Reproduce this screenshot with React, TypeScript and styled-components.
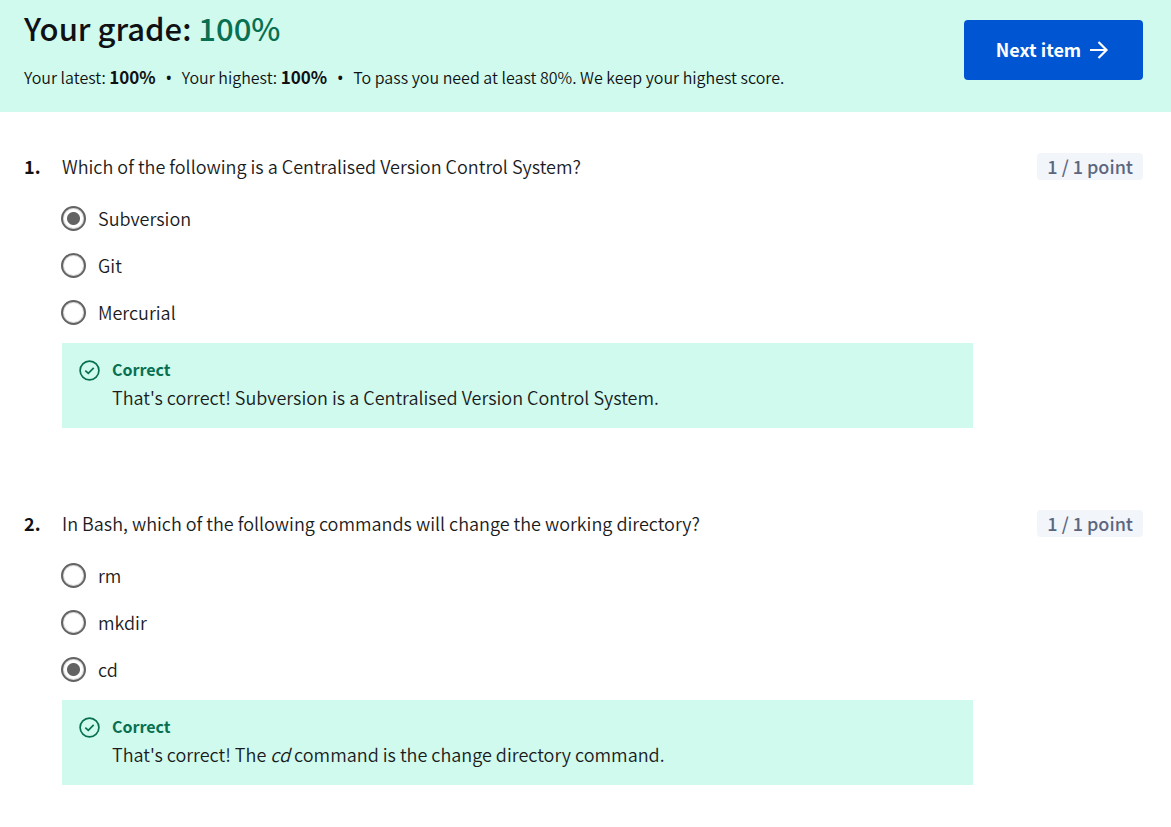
import React from "react";
import styled, { createGlobalStyle } from "styled-components";

const GlobalStyle = createGlobalStyle`
  *, *::before, *::after { box-sizing: border-box; }
  body {
    margin: 0;
    background: #ffffff;
    color: #1a1b1d;
    font-family: "Noto Sans CJK SC", "Noto Sans", sans-serif;
    font-size: 18px;
    font-weight: 350;
    line-height: 28px;
  }
`;

const Header = styled.header`
  display: flex;
  align-items: flex-start;
  justify-content: space-between;
  gap: 24px;
  min-height: 112px;
  padding: 8px 28px 20px 24px;
  background: #d0faed;
  color: #0f1114;
`;

const Title = styled.h1`
  margin: 0;
  font-size: 31px;
  line-height: 40px;
  font-weight: 500;
`;

const Grade = styled.span`
  color: #087051;
`;

const Summary = styled.p`
  display: flex;
  flex-wrap: wrap;
  margin: 15px 0 0;
  font-size: 16px;
  line-height: 28px;
`;

const Fact = styled.span`
  & + &::before {
    content: "•";
    margin: 0 10px;
    font-family: "Noto Sans", sans-serif;
    font-weight: 500;
  }
`;

const Strong = styled.strong`
  font-size: 17px;
  font-weight: 700;
`;

const NextButton = styled.button`
  display: flex;
  flex: none;
  align-items: center;
  justify-content: center;
  gap: 6px;
  width: 179px;
  height: 60px;
  margin-top: 12px;
  padding: 0;
  border: 0;
  border-radius: 4px;
  background: #0056d2;
  color: #ffffff;
  font: inherit;
  font-weight: 700;
  cursor: pointer;
`;

const Questions = styled.main`
  display: flex;
  flex-direction: column;
  gap: 81px;
  padding: 40px 28px 42px 24px;
`;

const Question = styled.section`
  display: grid;
  grid-template-columns: 38px minmax(0, 911px) minmax(max-content, 1fr);
`;

const Number = styled.span`
  color: #0f1114;
  font-weight: 700;
`;

const Prompt = styled.h2`
  margin: 0 0 15px;
  font-size: 18px;
  line-height: 28px;
  font-weight: inherit;
`;

const Points = styled.span`
  justify-self: end;
  align-self: start;
  margin-top: 1px;
  padding: 0 10px;
  border-radius: 4px;
  background: #f2f5fa;
  color: #5b6780;
  line-height: 27px;
  font-weight: 500;
`;

const Options = styled.fieldset`
  grid-column: 2;
  min-width: 0;
  margin: 0 0 7px;
  padding: 0;
  border: 0;
`;

const Option = styled.label`
  display: flex;
  align-items: center;
  gap: 12px;
  height: 47px;
`;

const Caption = styled.span`
  padding-bottom: 2px;
`;

const Radio = styled.input`
  appearance: none;
  width: 25px;
  height: 25px;
  margin: 0 0 0 -1px;
  border: 2px solid #636363;
  border-radius: 50%;
  background: #ffffff;
  box-shadow: inset 0 0 0 1px #d8d8d8;
  &:checked {
    background: radial-gradient(circle, #636363 6px, #ffffff 7px);
  }
`;

const Feedback = styled.div`
  display: grid;
  grid-column: 2;
  grid-template-columns: 21px 1fr;
  column-gap: 12px;
  padding: 12px 17px 17px;
  background: #d0faed;
`;

const CheckMark = styled.svg`
  margin-top: 5px;
`;

const Verdict = styled.strong`
  color: #087051;
  font-size: 16px;
  font-weight: 700;
`;

const Explanation = styled.div`
  grid-column: 2;
`;

const CheckIcon = () => (
  <CheckMark width="21" height="21" viewBox="0 0 21 21" fill="none" stroke="#087051" strokeWidth="1.7" aria-hidden="true">
    <circle cx="10.5" cy="10.5" r="9.4" />
    <path d="M6.300 10.600 9.300 13.300 14.700 7.900" />
  </CheckMark>
);

const ArrowIcon = () => (
  <svg width="24" height="24" viewBox="0 0 24 24" fill="none" stroke="#ffffff" strokeWidth="2.2" aria-hidden="true">
    <path d="M3 12h16.500M11.500 4l8 8-8 8" />
  </svg>
);

interface QuizItem {
  prompt: string;
  options: string[];
  answer: string;
  explanation: React.ReactNode;
}

const items: QuizItem[] = [
  {
    prompt: "Which of the following is a Centralised Version Control System?",
    options: ["Subversion", "Git", "Mercurial"],
    answer: "Subversion",
    explanation: "That's correct! Subversion is a Centralised Version Control System.",
  },
  {
    prompt: "In Bash, which of the following commands will change the working directory?",
    options: ["rm", "mkdir", "cd"],
    answer: "cd",
    explanation: (
      <>
        That's correct! The <em>cd</em> command is the change directory command.
      </>
    ),
  },
];

export default function App() {
  return (
    <>
      <GlobalStyle />
      <Header>
        <div>
          <Title>
            Your grade: <Grade>100%</Grade>
          </Title>
          <Summary>
            <Fact>Your latest: <Strong>100%</Strong></Fact>
            <Fact>Your highest: <Strong>100%</Strong></Fact>
            <Fact>To pass you need at least 80%. We keep your highest score.</Fact>
          </Summary>
        </div>
        <NextButton type="button">
          <Caption>Next item</Caption>
          <ArrowIcon />
        </NextButton>
      </Header>
      <Questions>
        {items.map((item, i) => (
          <Question key={item.prompt}>
            <Number>{i + 1}.</Number>
            <Prompt id={`prompt-${i}`}>{item.prompt}</Prompt>
            <Points>1 / 1 point</Points>
            <Options aria-labelledby={`prompt-${i}`}>
              {item.options.map((option) => (
                <Option key={option}>
                  <Radio type="radio" name={`question-${i}`} defaultChecked={option === item.answer} />
                  <Caption>{option}</Caption>
                </Option>
              ))}
            </Options>
            <Feedback>
              <CheckIcon />
              <Verdict>Correct</Verdict>
              <Explanation>{item.explanation}</Explanation>
            </Feedback>
          </Question>
        ))}
      </Questions>
    </>
  );
}
